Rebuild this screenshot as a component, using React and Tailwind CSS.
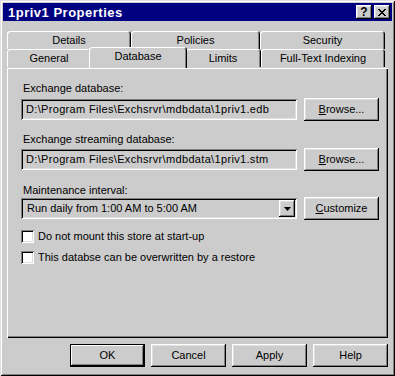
import React from 'react';

// classic 3D edges
const raised =
  'shadow-[inset_-1px_-1px_0_#000,inset_1px_1px_0_#fff,inset_-2px_-2px_0_#808080,inset_2px_2px_0_#dfdfdf]';
const defaultRaised =
  'shadow-[inset_0_0_0_1px_#000,inset_-2px_-2px_0_#000,inset_2px_2px_0_#fff,inset_-3px_-3px_0_#808080]';
const sunken =
  'shadow-[inset_1px_1px_0_#808080,inset_-1px_-1px_0_#fff,inset_2px_2px_0_#000,inset_-2px_-2px_0_#dfdfdf]';
const tabEdge =
  'shadow-[inset_1px_1px_0_#fff,inset_-1px_0_0_#000,inset_-2px_0_0_#808080]';

function Button({ children, isDefault, className = '' }) {
  return (
    <div
      className={`w-[75px] h-[23px] flex items-center justify-center bg-[#cccccc] text-black ${
        isDefault ? defaultRaised : raised
      } ${className}`}
    >
      {children}
    </div>
  );
}

function Tab({ label, width, selected }) {
  return (
    <div
      className={`flex items-center justify-center rounded-t-[3px] bg-[#cccccc] ${tabEdge} ${
        selected ? 'relative z-10 h-[21px] -mt-[2px] -mx-[2px] pb-[2px]' : 'h-[18px]'
      }`}
      style={{ width }}
    >
      {label}
    </div>
  );
}

function Field({ value }) {
  return (
    <div className={`w-[276px] h-[21px] flex items-center pl-[5px] bg-[#cccccc] whitespace-nowrap tracking-[0.33px] ${sunken}`}>
      {value}
    </div>
  );
}

function Check({ label, className = '' }) {
  return (
    <div className={`flex items-center h-[13px] ${className}`}>
      <div className={`w-[13px] h-[13px] bg-white shrink-0 ${sunken}`} />
      <span className="ml-[4px] leading-[13px]">{label}</span>
    </div>
  );
}

export default function App() {
  return (
    <div className="w-[395px] h-[376px] bg-[#cccccc] p-[3px] flex flex-col text-[11px] text-black font-['Liberation_Sans',Arial,sans-serif] shadow-[inset_1px_1px_0_#dfdfdf,inset_-1px_-1px_0_#000,inset_2px_2px_0_#fff,inset_-2px_-2px_0_#808080]">
      {/* Title bar */}
      <div className="h-[18px] bg-[#000080] flex items-center pl-[5px] pr-[2px]">
        <span className="text-white font-bold text-[13px] tracking-[0.5px] leading-none">1priv1 Properties</span>
        <div className="ml-auto flex gap-[2px]">
          <div className={`w-[16px] h-[14px] flex items-center justify-center ${raised} bg-[#cccccc]`}>
            <span className="font-bold text-[12px] leading-none">?</span>
          </div>
          <div className={`w-[16px] h-[14px] flex items-center justify-center ${raised} bg-[#cccccc]`}>
            <svg width="8" height="7" viewBox="0 0 8 7">
              <path d="M0 0 L7 7 M1 0 L8 7 M7 0 L0 7 M8 0 L1 7" stroke="#000" strokeWidth="1" />
            </svg>
          </div>
        </div>
      </div>

      {/* Tabs + panel */}
      <div className="px-[4px] mt-[10px] flex flex-col">
        <div className="flex">
          <Tab label="Details" width={124} />
          <Tab label="Policies" width={129} />
          <Tab label="Security" width={125} />
        </div>
        <div className="flex">
          <Tab label="General" width={84} />
          <Tab label="Database" width={98} selected />
          <Tab label="Limits" width={76} />
          <Tab label="Full-Text Indexing" width={124} />
        </div>

        <div className="h-[270px] bg-[#cccccc] flex flex-col pl-[14px] pr-[9px] pt-[14px] shadow-[inset_1px_1px_0_#fff,inset_-1px_-1px_0_#000,inset_-2px_-2px_0_#808080]">
          <div className="leading-[13px] pl-[2px]">Exchange database:</div>
          <div className="flex items-center gap-[7px] h-[23px] mt-[3px]">
            <Field value="D:\Program Files\Exchsrvr\mdbdata\1priv1.edb" />
            <Button>
              <span>
                <u>B</u>rowse...
              </span>
            </Button>
          </div>

          <div className="leading-[13px] pl-[2px] mt-[12px]">Exchange streaming database:</div>
          <div className="flex items-center gap-[7px] h-[23px] mt-[2px]">
            <Field value="D:\Program Files\Exchsrvr\mdbdata\1priv1.stm" />
            <Button>
              <span>
                <u>B</u>rowse...
              </span>
            </Button>
          </div>

          <div className="leading-[13px] pl-[2px] mt-[13px]">Maintenance interval:</div>
          <div className="flex items-center gap-[7px] h-[23px]">
            <div className={`relative w-[276px] h-[21px] flex items-center pl-[6px] bg-[#cccccc] ${sunken}`}>
              <span className="whitespace-nowrap">Run daily from 1:00 AM to 5:00 AM</span>
              <div className={`absolute right-[2px] top-[2px] w-[16px] h-[17px] flex items-center justify-center bg-[#cccccc] ${raised}`}>
                <svg width="7" height="4" viewBox="0 0 7 4">
                  <path d="M0 0 H7 L3.5 4 Z" fill="#000" />
                </svg>
              </div>
            </div>
            <Button>
              <span>
                <u>C</u>ustomize
              </span>
            </Button>
          </div>

          <Check className="mt-[10px]" label="Do not mount this store at start-up" />
          <Check className="mt-[8px]" label="This databse can be overwritten by a restore" />
        </div>

        <div className="flex justify-end gap-[6px] mt-[6px]">
          <Button isDefault>OK</Button>
          <Button>Cancel</Button>
          <Button>Apply</Button>
          <Button>Help</Button>
        </div>
      </div>
    </div>
  );
}
